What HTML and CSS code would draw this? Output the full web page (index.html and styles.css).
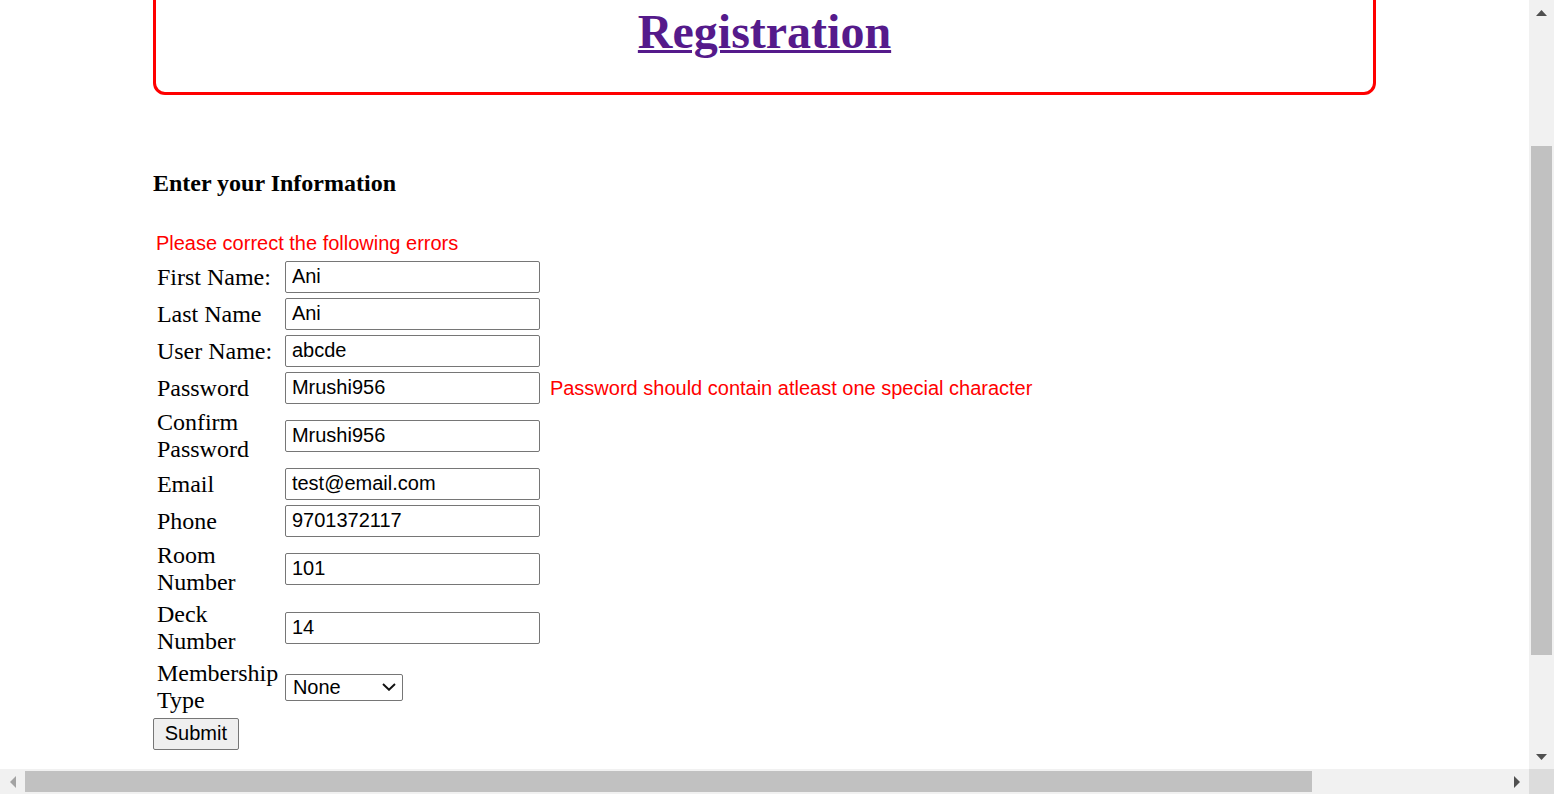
FILE: index.html
```html
<!DOCTYPE html>
<html lang="en">
<head>
<meta charset="utf-8">
<title>Registration</title>
<link rel="stylesheet" href="styles.css">
</head>
<body>
<div class="window">
  <div class="top">
    <div class="viewport">
      <div class="page">
        <div class="banner">
          <h1 class="title"><a class="title-link" href="#">Registration</a></h1>
        </div>
        <section class="info">
          <h3 class="info-head">Enter your Information</h3>
          <p class="errors">Please correct the following errors</p>
          <form class="form-grid">
            <label class="lbl">First Name:</label>
            <input class="field" type="text" value="Ani">
            <label class="lbl">Last Name</label>
            <input class="field" type="text" value="Ani">
            <label class="lbl">User Name:</label>
            <input class="field" type="text" value="abcde">
            <label class="lbl">Password</label>
            <input class="field" type="text" value="Mrushi956">
            <span class="msg">Password should contain atleast one special character</span>
            <label class="lbl">Confirm Password</label>
            <input class="field" type="text" value="Mrushi956">
            <label class="lbl">Email</label>
            <input class="field" type="text" value="test@email.com">
            <label class="lbl">Phone</label>
            <input class="field" type="text" value="9701372117">
            <label class="lbl">Room Number</label>
            <input class="field" type="text" value="101">
            <label class="lbl">Deck Number</label>
            <input class="field" type="text" value="14">
            <label class="lbl">Membership Type</label>
            <div class="select-wrap">
              <select class="select">
                <option>None</option>
                <option>Silver</option>
                <option>Gold</option>
              </select>
              <svg class="chev" width="14" height="8" viewBox="0 0 14 8"><polyline points="1,1 7,6.8 13,1" fill="none" stroke="#111" stroke-width="1.9"/></svg>
            </div>
          </form>
          <button class="submit" type="button">Submit</button>
        </section>
      </div>
    </div>
    <div class="vscroll">
      <div class="sbtn"><svg width="11" height="6" viewBox="0 0 11 6"><polygon points="0,6 5.5,0 11,6" fill="#505050"/></svg></div>
      <div class="vtrack"><div class="vthumb"></div></div>
      <div class="sbtn"><svg width="11" height="6" viewBox="0 0 11 6"><polygon points="0,0 11,0 5.5,6" fill="#505050"/></svg></div>
    </div>
  </div>
  <div class="bottom">
    <div class="hscroll">
      <div class="hbtn"><svg width="6" height="12" viewBox="0 0 6 12"><polygon points="6,0 6,12 0,6" fill="#a3a3a3"/></svg></div>
      <div class="htrack"><div class="hthumb"></div></div>
      <div class="hbtn"><svg width="6" height="12" viewBox="0 0 6 12"><polygon points="0,0 6,6 0,12" fill="#505050"/></svg></div>
    </div>
    <div class="corner"></div>
  </div>
</div>
</body>
</html>
```

FILE: styles.css
```css
html, body {
  margin: 0;
  padding: 0;
  background: #ffffff;
}

.window {
  width: 1554px;
  height: 794px;
  display: flex;
  flex-direction: column;
  overflow: hidden;
}

.top {
  flex: 1;
  display: flex;
  min-height: 0;
}

.viewport {
  flex: 1;
  overflow: hidden;
  background: #ffffff;
}

.page {
  margin: -32px 10% 0;
  font-family: "Liberation Serif", "Times New Roman", serif;
  color: #000;
}

.banner {
  border: 3px solid #ff0000;
  border-radius: 12px;
}

.title {
  margin: 34px 0;
  font-size: 48px;
  line-height: 53px;
  font-weight: bold;
  text-align: center;
}

.title-link {
  color: #551a8b;
  text-decoration: underline;
  text-decoration-thickness: 3px;
}

.info-head {
  margin: 75px 0 0;
  font-size: 24px;
  line-height: 27px;
  font-weight: bold;
}

.errors {
  margin: 35px 0 0;
  padding-left: 3px;
  font-family: "Liberation Sans", Arial, sans-serif;
  font-size: 20px;
  line-height: 23px;
  color: #ff0000;
}

.form-grid {
  margin-top: 6px;
  display: grid;
  grid-template-columns: 132px 255px auto;
  row-gap: 5px;
  align-items: center;
  justify-items: start;
}

.lbl {
  grid-column: 1;
  padding-left: 4px;
  font-size: 24px;
  line-height: 27px;
}

.field {
  grid-column: 2;
  box-sizing: border-box;
  width: 255px;
  height: 32px;
  margin: 0;
  padding: 0 6px 1px;
  border: 1px solid #767676;
  border-radius: 2px;
  font-family: "Liberation Sans", Arial, sans-serif;
  font-size: 20px;
  color: #000;
  background: #fff;
}

.msg {
  grid-column: 3;
  margin-left: 10px;
  font-family: "Liberation Sans", Arial, sans-serif;
  font-size: 20px;
  line-height: 23px;
  color: #ff0000;
  white-space: nowrap;
}

.select-wrap {
  grid-column: 2;
  position: relative;
  display: flex;
}

.select {
  -webkit-appearance: none;
  appearance: none;
  box-sizing: border-box;
  width: 118px;
  height: 27px;
  margin: 0;
  padding: 0 0 0 7px;
  border: 1px solid #767676;
  border-radius: 2px;
  background: #fff;
  font-family: "Liberation Sans", Arial, sans-serif;
  font-size: 20px;
  line-height: 25px;
  color: #000;
}

.chev {
  position: absolute;
  left: 97px;
  top: 9px;
  pointer-events: none;
}

.submit {
  display: block;
  margin: 4px 0 0;
  box-sizing: border-box;
  width: 86px;
  height: 32px;
  padding: 0 0 1px;
  border: 1px solid #767676;
  border-radius: 2px;
  background: #efefef;
  font-family: "Liberation Sans", Arial, sans-serif;
  font-size: 20px;
  color: #000;
}

/* scrollbars */
.vscroll {
  width: 25px;
  background: #f1f1f1;
  display: flex;
  flex-direction: column;
}

.sbtn {
  height: 25px;
  display: flex;
  align-items: center;
  justify-content: center;
}

.vtrack {
  flex: 1;
  padding: 0 2px;
}

.vthumb {
  margin-top: 121px;
  height: 509px;
  background: #c1c1c1;
}

.bottom {
  height: 25px;
  display: flex;
}

.hscroll {
  flex: 1;
  display: flex;
  background: #f1f1f1;
}

.hbtn {
  width: 25px;
  display: flex;
  align-items: center;
  justify-content: center;
}

.htrack {
  flex: 1;
  padding: 2px 0;
}

.hthumb {
  width: 1287px;
  height: 21px;
  background: #c1c1c1;
}

.corner {
  width: 25px;
  background: #dcdcdc;
}
```
